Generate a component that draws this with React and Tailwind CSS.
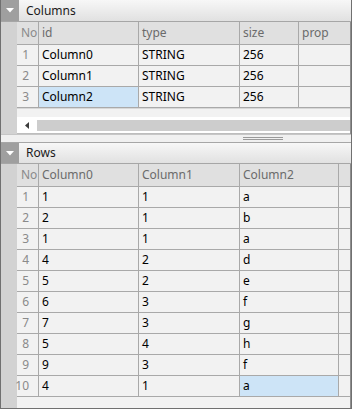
import React from 'react'

const colsData = [
    ['Column0', 'STRING', '256'],
    ['Column1', 'STRING', '256'],
    ['Column2', 'STRING', '256'],
]

const rowsData = [
    ['1', '1', 'a'],
    ['2', '1', 'b'],
    ['1', '1', 'a'],
    ['4', '2', 'd'],
    ['5', '2', 'e'],
    ['6', '3', 'f'],
    ['7', '3', 'g'],
    ['5', '4', 'h'],
    ['9', '3', 'f'],
    ['4', '1', 'a'],
]

const SectionHeader = ({ title, top }) => (
    <div className={`h-[22px] flex shrink-0 border-b border-[#a6a6a6] bg-gradient-to-b from-[#f7f7f7] to-[#e1e1e1] ${top ? 'border-t' : ''}`}>
        <div className="w-[18px] bg-[#9f9f9f] flex items-center justify-center">
            <svg width="8" height="5" viewBox="0 0 8 5">
                <polygon points="0,0 8,0 4,4.5" fill="#ffffff" />
            </svg>
        </div>
        <div className="pl-[7px] flex items-center text-[#1b1b1b]">{title}</div>
    </div>
)

const Cell = ({ children, w, head, sel, last }) => (
    <div
        className={`${w} h-full flex items-center pl-[3px] overflow-hidden whitespace-nowrap ${last ? '' : 'border-r border-[#a9a9a9]'} ${head ? 'text-[#6b6b6b]' : 'text-black'} ${sel ? 'bg-[#cde4f7]' : ''}`}
    >
        {children}
    </div>
)

const NoCell = ({ children, head }) => (
    <div
        className={`w-[22px] shrink-0 h-full flex items-center border-r border-[#a9a9a9] text-[#8a8a8a] whitespace-nowrap ${head ? 'justify-start pl-[4px] text-[#6b6b6b]' : 'justify-end pr-[9px]'}`}
    >
        {children}
    </div>
)

export default function App() {
    return (
        <div className="w-[352px] h-[409px] flex flex-col bg-[#f2f2f2] border-x border-b border-[#707070] font-['Noto_Sans','Open_Sans',sans-serif] text-[12px] leading-none overflow-hidden">
            {/* Columns */}
            <SectionHeader title="Columns" />
            <div className="flex h-[112px] shrink-0">
                <div className="w-[16px] shrink-0 bg-[#d2d2d2]" />
                <div className="flex-1 flex flex-col border-r border-[#8f8f8f]">
                    <div className="h-[23px] flex bg-[#e0e0e0] border-b border-[#a9a9a9]">
                        <NoCell head>No</NoCell>
                        <Cell w="w-[100px]" head>id</Cell>
                        <Cell w="w-[101px]" head>type</Cell>
                        <Cell w="w-[59px]" head>size</Cell>
                        <Cell w="flex-1" head last>prop</Cell>
                    </div>
                    {colsData.map((r, i) => (
                        <div key={i} className="h-[21px] flex border-b border-[#a9a9a9]">
                            <NoCell>{i + 1}</NoCell>
                            <Cell w="w-[100px]" sel={i === 2}>{r[0]}</Cell>
                            <Cell w="w-[101px]">{r[1]}</Cell>
                            <Cell w="w-[59px]">{r[2]}</Cell>
                            <Cell w="flex-1" last />
                        </div>
                    ))}
                    <div className="flex-1 border-t border-[#d8d8d8]" />
                    <div className="h-[17px] flex items-center bg-white border-b border-[#bdbdbd]">
                        <div className="w-[20px] flex items-center justify-center">
                            <svg width="4" height="7" viewBox="0 0 4 7">
                                <polygon points="4,0 4,7 0,3.5" fill="#3c3c3c" />
                            </svg>
                        </div>
                        <div className="flex-1 h-[11px] bg-[#cdcdcd]" />
                    </div>
                </div>
            </div>
            {/* splitter */}
            <div className="h-[8px] shrink-0 flex items-center border-t border-[#c6c6c6] bg-[#f0f0f0]">
                <div className="ml-[242px] w-[40px] h-[3px] border-y border-[#9a9a9a]" />
            </div>
            {/* Rows */}
            <SectionHeader title="Rows" top />
            <div className="flex flex-1">
                <div className="w-[16px] shrink-0 bg-[#d2d2d2]" />
                <div className="flex-1 flex flex-col border-r border-[#8f8f8f]">
                    <div className="h-[23px] flex bg-[#e0e0e0] border-b border-[#a9a9a9]">
                        <NoCell head>No</NoCell>
                        <Cell w="w-[100px]" head>Column0</Cell>
                        <Cell w="w-[101px]" head>Column1</Cell>
                        <Cell w="w-[99px]" head>Column2</Cell>
                        <Cell w="flex-1" head last />
                    </div>
                    {rowsData.map((r, i) => (
                        <div key={i} className="h-[21px] flex border-b border-[#a9a9a9]">
                            <NoCell>{i + 1}</NoCell>
                            <Cell w="w-[100px]">{r[0]}</Cell>
                            <Cell w="w-[101px]">{r[1]}</Cell>
                            <Cell w="w-[99px]" sel={i === 9}>{r[2]}</Cell>
                            <div className="flex-1" />
                        </div>
                    ))}
                    <div className="flex-1" />
                </div>
            </div>
        </div>
    )
}
